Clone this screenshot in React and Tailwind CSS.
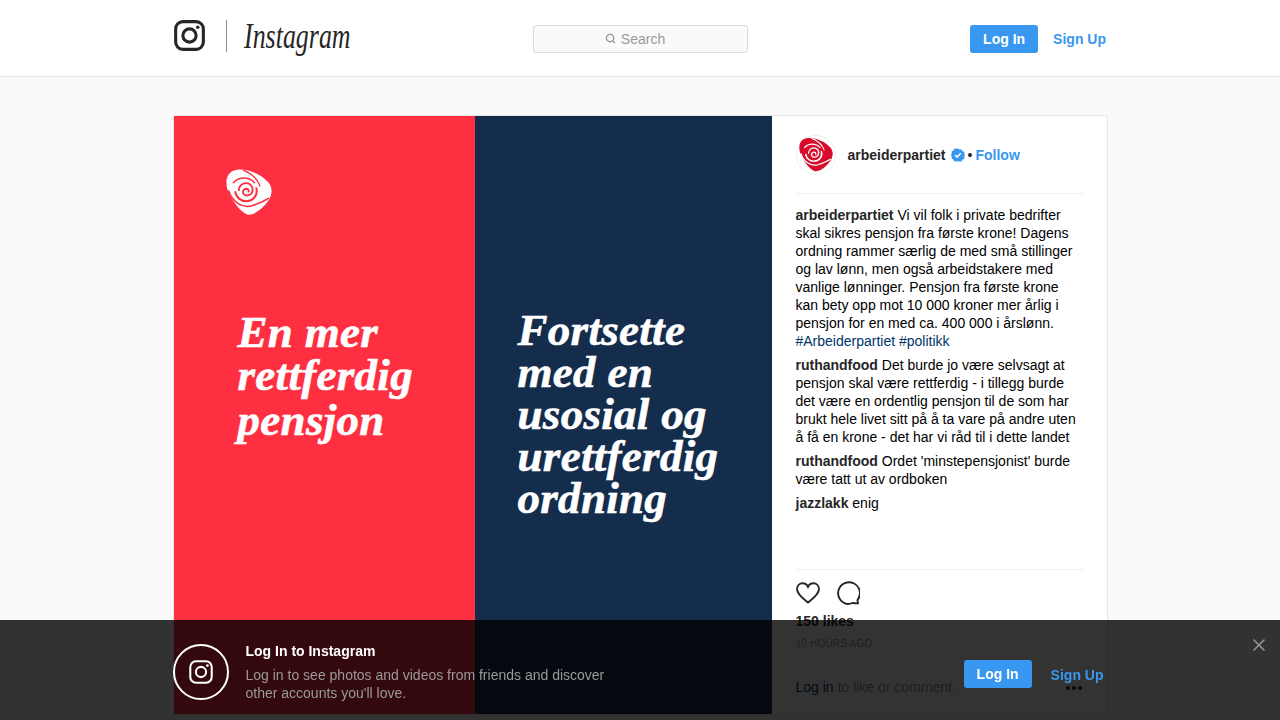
import { Search, X } from 'lucide-react';

const SANS = "font-['Liberation_Sans',Arial,sans-serif]";

function Glyph({ className, color = '#262626', stroke = 3 }) {
  return (
    <svg viewBox="0 0 30 30" className={className} fill="none" stroke={color} strokeWidth={stroke}>
      <rect x="1.6" y="1.6" width="26.8" height="26.8" rx="7" />
      <circle cx="15" cy="15" r="6.4" />
      <circle cx="23" cy="7" r="1.7" fill={color} stroke="none" />
    </svg>
  );
}

function Rose({ className, fill, ink }) {
  return (
    <svg viewBox="0 0 100 100" className={className}>
      <path d="M22 2C44-2 76 10 93 30c9 12 8 28-3 42C78 88 60 101 46 99 30 92 12 68 3 44-3 22 4 5 22 2Z" fill={fill} />
      <g fill="none" stroke={ink} strokeLinecap="round">
        <path d="M38 3c16 6 30 18 36 34" strokeWidth="3" />
        <path d="M6 48c8 24 30 38 50 32 12-4 24-8 36-16" strokeWidth="3.5" />
        <path d="M16 30c12-14 34-14 46 0" strokeWidth="3" />
        <path d="M66 42c4 16-8 28-22 28-12 0-22-8-24-20" strokeWidth="4.5" />
        <path d="M28 46c0-12 12-18 22-14 8 4 10 14 6 20-4 6-14 8-18 2-3-5 0-11 6-11 4 0 6 3 5 6" strokeWidth="4" />
      </g>
    </svg>
  );
}

function Badge() {
  return (
    <svg viewBox="0 0 16 16" className="w-[14px] h-[14px] shrink-0">
      <path
        d="M8 .5l1.9 1.3 2.3-.2 1 2.1 2.1 1-.2 2.3L16 8l-.9 1.9.2 2.3-2.1 1-1 2.1-2.3-.2L8 15.5l-1.9-.4-2.3.2-1-2.1-2.1-1 .2-2.3L0 8l.9-1.9-.2-2.3 2.1-1 1-2.1 2.3.2z"
        fill="#3897f0"
      />
      <path d="M4.8 8.2l2.2 2.2 4.2-4.4" fill="none" stroke="#fff" strokeWidth="1.8" />
    </svg>
  );
}

const comments = [
  {
    name: 'arbeiderpartiet',
    text: 'Vi vil folk i private bedrifter skal sikres pensjon fra første krone! Dagens ordning rammer særlig de med små stillinger og lav lønn, men også arbeidstakere med vanlige lønninger. Pensjon fra første krone kan bety opp mot 10 000 kroner mer årlig i pensjon for en med ca. 400 000 i årslønn.',
    tags: '#Arbeiderpartiet #politikk',
  },
  {
    name: 'ruthandfood',
    text: 'Det burde jo være selvsagt at pensjon skal være rettferdig - i tillegg burde det være en ordentlig pensjon til de som har brukt hele livet sitt på å ta vare på andre uten å få en krone - det har vi råd til i dette landet',
  },
  { name: 'ruthandfood', text: "Ordet 'minstepensjonist' burde være tatt ut av ordboken" },
  { name: 'jazzlakk', text: 'enig' },
];

export default function App() {
  return (
    <div className={`${SANS} min-h-screen bg-[#fafafa] text-[14px] leading-[18px] text-[#262626]`}>
      {/* Top bar */}
      <header className="h-[77px] bg-white border-b border-[#e6e6e6]">
        <div className="ml-[174px] w-[932px] h-[76px] flex items-center">
          <div className="w-[359px] flex items-center">
            <Glyph className="w-[31px] h-[31px] mt-[-5px]" />
            <div className="ml-[21px] w-px h-[32px] bg-[#8e8e8e] mt-[-5px]" />
            <span className="ml-[17px] mt-[-4px] w-[107px] origin-left scale-x-[0.72] font-['Liberation_Serif',serif] italic text-[36px] leading-[40px] text-[#262626]">
              Instagram
            </span>
          </div>
          <div className="w-[215px] h-[28px] mt-[1px] pr-[11px] flex items-center justify-center gap-[5px] bg-[#fafafa] border border-[#dbdbdb] rounded-[3px] text-[#999]">
            <Search className="w-[11px] h-[11px]" strokeWidth={3} />
            <span>Search</span>
          </div>
          <div className="ml-auto flex items-center gap-[15px] font-bold mt-[1px]">
            <button className="w-[68px] h-[28px] rounded-[3px] bg-[#3897f0] text-white font-bold">Log In</button>
            <span className="text-[#3897f0]">Sign Up</span>
          </div>
        </div>
      </header>

      {/* Post */}
      <main className="pt-[38px] pb-[60px]">
        <article className="mx-auto w-[935px] flex bg-white border border-[#e6e6e6] rounded-[3px]">
          <div className="w-[598px] h-[598px] shrink-0 flex">
            <div className="w-[301px] bg-[#fe2f40] pl-[64px] pt-[51px] font-['Liberation_Serif',serif] font-bold italic text-white text-[45px] leading-[43px] tracking-[0.3px] [-webkit-text-stroke:0.6px_white]">
              <Rose className="w-[46px] h-[50px] mb-[94px] -ml-[12px]" fill="#fff" ink="#fe2f40" />
              <p>En mer</p>
              <p>rettferdig</p>
              <p className="mt-[2px]">pensjon</p>
            </div>
            <div className="w-[297px] bg-[#152d4c] pl-[43px] pt-[193px] font-['Liberation_Serif',serif] font-bold italic text-white text-[45px] leading-[42px] tracking-[0.3px] [-webkit-text-stroke:0.6px_white]">
              <p>Fortsette</p>
              <p>med en</p>
              <p>usosial og</p>
              <p>urettferdig</p>
              <p>ordning</p>
            </div>
          </div>

          <div className="flex-1 flex flex-col px-[24px]">
            <div className="h-[78px] shrink-0 flex items-center border-b border-[#efefef]">
              <div className="w-[40px] h-[40px] rounded-full border border-[#efefef] flex items-center justify-center">
                <Rose className="w-[34px] h-[35px]" fill="#d70b2c" ink="#fff" />
              </div>
              <span className="ml-[12px] font-bold">arbeiderpartiet</span>
              <span className="ml-[5px]"><Badge /></span>
              <span className="ml-[3px]">•</span>
              <span className="ml-[3px] font-bold text-[#3897f0]">Follow</span>
            </div>

            <div className="flex-1 pt-[12px] flex flex-col gap-[6px] text-[#000]">
              {comments.map((c, i) => (
                <p key={i}>
                  <span className="font-bold text-[#262626]">{c.name}</span> {c.text}
                  {c.tags && <> <span className="text-[#003569]">{c.tags}</span></>}
                </p>
              ))}
            </div>

            <div className="h-[145px] shrink-0 border-t border-[#efefef]">
              <div className="flex items-center gap-[16px] pt-[4px] h-[41px]">
                <svg viewBox="0 0 24 22" className="w-[24px] h-[22px]" fill="none" stroke="#262626" strokeWidth="1.9">
                  <path d="M12 20.6C8.5 17.6 1 12.6 1 7 1 3.6 3.5 1.2 6.6 1.2 9 1.2 11 2.6 12 4.8 13 2.6 15 1.2 17.4 1.2 20.5 1.2 23 3.6 23 7c0 5.6-7.5 10.6-11 13.6Z" />
                </svg>
                <svg viewBox="0 0 24 24" className="w-[24px] h-[24px]" fill="none" stroke="#262626" strokeWidth="1.9">
                  <path d="M22 22.4l-.5-3.4A10.9 10.9 0 1 0 12 23c1.4 0 3-.4 4.2-1 2 .2 3.8.3 5.8.4Z" strokeLinejoin="round" />
                </svg>
              </div>
              <p className="mt-[1px] font-bold">150 likes</p>
              <p className="mt-[6px] pb-[6px] text-[10px] tracking-[0.2px] leading-[16px] text-[#999] border-b border-[#efefef]">10 HOURS AGO</p>
              <div className="h-[56px] flex items-center justify-between text-[#999]">
                <p><span className="text-[#003569]">Log in</span> to like or comment.</p>
                <span className="mr-[1px] mt-[2px] flex gap-[2px]">
                  <i className="w-[4px] h-[4px] rounded-full bg-[#262626]" />
                  <i className="w-[4px] h-[4px] rounded-full bg-[#262626]" />
                  <i className="w-[4px] h-[4px] rounded-full bg-[#262626]" />
                </span>
              </div>
            </div>
          </div>
        </article>
      </main>

      {/* Login prompt */}
      <div className="fixed left-0 right-0 bottom-0 h-[100px] bg-black/80">
        <div className="mx-auto w-[935px] pr-[4px] h-full flex items-center text-white">
          <div className="w-[56px] h-[56px] mt-[4px] rounded-full border-2 border-white flex items-center justify-center shrink-0">
            <Glyph className="w-[24px] h-[24px]" color="#fff" stroke={2.6} />
          </div>
          <div className="ml-[17px] w-[370px] mt-[4px]">
            <p className="font-bold">Log In to Instagram</p>
            <p className="mt-[6px] text-[#999]">Log in to see photos and videos from friends and discover other accounts you'll love.</p>
          </div>
          <div className="ml-auto flex items-center gap-[19px] font-bold mt-[8px]">
            <button className="w-[68px] h-[28px] rounded-[3px] bg-[#3897f0] text-white font-bold">Log In</button>
            <span className="text-[#3897f0] mt-[2px]">Sign Up</span>
          </div>
        </div>
        <X className="absolute right-[11px] top-[15px] w-[20px] h-[20px] text-[#999]" strokeWidth={1.8} />
      </div>
    </div>
  );
}
